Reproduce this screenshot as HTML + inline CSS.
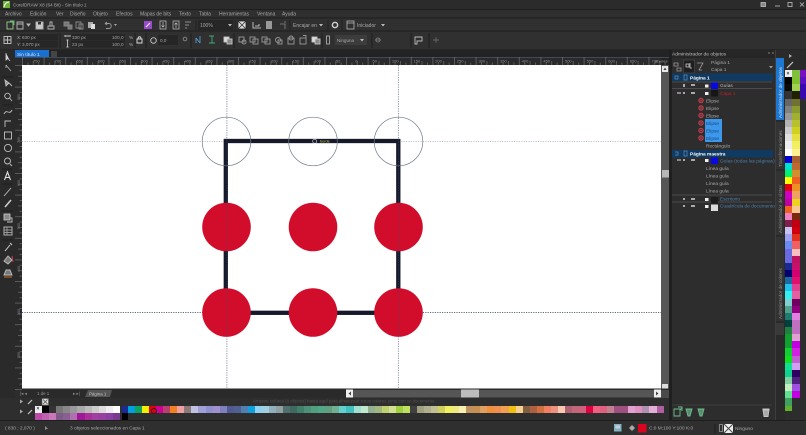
<!DOCTYPE html>
<html><head><meta charset="utf-8"><style>
html,body{margin:0;padding:0;background:#2d2d2d}
#r{position:relative;width:806px;height:435px;overflow:hidden;background:#2d2d2d;font-family:"Liberation Sans",sans-serif;filter:blur(.35px)}
svg{position:absolute;left:0;top:0}
text{font-family:"Liberation Sans",sans-serif;font-size:5px;fill:#a8a8a8}
.p{position:absolute;display:flex}
.p i{flex:1 1 0;display:block}
.c{position:absolute;width:7.4px}
.c i{display:block;height:7.15px}
</style></head><body><div id="r">
<svg width="806" height="435" viewBox="0 0 806 435">
<defs>
<pattern id="tx" x="22" y="57" width="21.6" height="8" patternUnits="userSpaceOnUse"><path d="M.5 0V8M5.9 5.5V8M11.3 4V8M16.7 5.5V8" stroke="#8a8a8a" stroke-width=".5"/></pattern>
<pattern id="ty" x="15" y="65" width="8" height="21.6" patternUnits="userSpaceOnUse"><path d="M0 .5H7M4.5 5.9H7M3 11.3H7M4.5 16.7H7" stroke="#8a8a8a" stroke-width=".5"/></pattern>
</defs>
<!-- bars -->
<rect width="806" height="9" fill="#2b2b2b"/>
<rect y="9" width="806" height="9" fill="#2f2f2f"/><path d="M0 9.5H806M0 18H806M0 31H806M0 50H806" stroke="#1e1e1e"/>
<rect y="18.5" width="806" height="12" fill="#303030"/><rect y="31.5" width="806" height="18" fill="#303030"/>
<rect y="50" width="806" height="15" fill="#232323"/>
<!-- logo/title -->
<rect x="3" y="1" width="7" height="7" fill="#6fb53a"/><path d="M4 7C5 3 7 2 9 2" stroke="#fff" fill="none"/>
<text x="13" y="6.5" font-size="4.6" style="font-size:4.6px">CorelDRAW X8 (64 Bit) - Sin título 1</text>
<g stroke="#c0c0c0" fill="none" stroke-width=".8"><rect x="761" y="2.5" width="4.5" height="4" fill="#888"/><path d="M775 6H780"/><rect x="788" y="2.5" width="4" height="4"/><path d="M800 2.5L804 6.5M804 2.5L800 6.5"/></g>
<!-- menu -->
<g style="font-size:5px">
<text x="5" y="15.5">Archivo</text><text x="30" y="15.5">Edición</text><text x="56" y="15.5">Ver</text><text x="70" y="15.5">Diseño</text><text x="93" y="15.5">Objeto</text><text x="116" y="15.5">Efectos</text><text x="140" y="15.5">Mapas de bits</text><text x="179" y="15.5">Texto</text><text x="199" y="15.5">Tabla</text><text x="219" y="15.5">Herramientas</text><text x="257" y="15.5">Ventana</text><text x="282" y="15.5">Ayuda</text>
</g>
<!-- toolbar 1 -->
<g fill="none" stroke="#b5b5b5" stroke-width=".9">
<rect x="7" y="22" width="6" height="7" stroke="#9ccb8f"/><path d="M10 21H14V25" stroke="#5fc06f"/>
<path d="M17 22H23V29H17Z M17 24H23"/><path d="M27 24L30 24L28.5 26Z" fill="#b5b5b5"/>
<rect x="36" y="22" width="7" height="7" fill="#c8c8c8"/><rect x="38" y="22" width="3" height="2.5" fill="#333" stroke="none"/>
<path d="M48 26H54V29H48ZM50 26V22H52V26"/>
<path d="M64 22L69 22V26H64ZM68 25H72V29H68Z" stroke="#888" fill="#777"/>
<path d="M76 22H81V28H76ZM79 24H83V29H79Z" stroke="#888"/><rect x="88" y="22" width="5" height="6" fill="#aaa" stroke="none"/><rect x="91" y="24" width="4" height="5" fill="#ddd" stroke="none"/>
<path d="M105 23.5H109C112 23.5 112 28.5 109 28.5H106M105 23.5L107 22M105 23.5L107 25" stroke="#999"/><path d="M114 24L117 24L115.500 26Z" fill="#aaa" stroke="none"/>
</g>
<rect x="144" y="21" width="8" height="8" fill="#9b4ad0"/><path d="M146 27L150 23" stroke="#fff"/>
<g fill="none" stroke="#b5b5b5" stroke-width=".8">
<rect x="160" y="21" width="6" height="8"/><path d="M163 22V27M161.500 25.500L163 27L164.500 25.500"/>
<rect x="173" y="21" width="6" height="8"/><path d="M176 28V23M174.500 24.500L176 23L177.500 24.500"/>
<path d="M185 22H191M185 25H189M185 28H187" stroke="#aaa"/>
<rect x="238" y="21" width="8" height="8" fill="#ddd" stroke="#222"/><path d="M238 21L246 29M246 21L238 29" stroke="#333"/>
<path d="M253 22V28H261M255 26H259V24" stroke="#ddd"/><rect x="266" y="21" width="6" height="8" fill="#999" stroke="none"/>
<path d="M280 24H285V29M285 21V23" stroke="#888"/>
<circle cx="335" cy="25" r="2.600" stroke-width="1.500" stroke="#ccc"/>
<rect x="347" y="21" width="7" height="8"/><path d="M347 23H354" />
</g>
<rect x="198" y="20" width="35" height="10" fill="#262626"/><text x="200" y="27">100%</text><path d="M228 24H232L230 26.500Z" fill="#bbb"/>
<text x="293" y="27">Encajar en</text><path d="M319 24H323L321 26.500Z" fill="#bbb"/>
<text x="357" y="27">Iniciador</text><path d="M381 24H385L383 26.500Z" fill="#bbb"/>
<path d="M172 20V30M196 20V30M235 20V30M290 20V30M328 20V30M342 20V30" stroke="#222"/>
<!-- property bar -->
<g fill="none" stroke="#c5c5c5" stroke-width=".9">
<rect x="4" y="36.500" width="7" height="7"/><path d="M4 40H11M7.500 36.500V43.500"/>
<path d="M65 36H75M65 35V37M75 35V37M67.500 40V47M66.500 40H68.500M66.500 47H68.500"/>
<path d="M138 39C138 36 141 36 141 39M137 39H142V43H137Z" stroke="#ddd"/>
<circle cx="153.500" cy="40.500" r="2.800"/>
<circle cx="185" cy="39" r="1.800" stroke="#888"/>
<path d="M196 38V43M200 36V43M196 38L200 43" stroke="#5a9ad0"/>
<path d="M209 36H214M209 43H215M212 36V43" stroke="#45a878"/>
<rect x="224" y="37" width="5" height="5" fill="#ddd"/><rect x="227" y="39" width="5" height="5" fill="#888"/>
<g stroke="#999"><rect x="239" y="37" width="5" height="5"/><circle cx="244" cy="42" r="2"/><rect x="250" y="37" width="5" height="5"/><rect x="253" y="39" width="5" height="5"/><rect x="262" y="37" width="5" height="5"/><rect x="265" y="39" width="5" height="5"/><circle cx="278" cy="40" r="2.500"/><rect x="278" y="40" width="4" height="4"/><rect x="288" y="38" width="6" height="6"/><circle cx="291" cy="38" r="2"/><rect x="300" y="38" width="6" height="6"/><path d="M303 35.500H306V38"/></g>
<rect x="312" y="37" width="5" height="5" fill="#ddd"/><rect x="315" y="39" width="5" height="5" fill="#888"/>
<rect x="326.500" y="36" width="3" height="8" stroke="#aaa"/>
<circle cx="378" cy="40" r="2" stroke="#777"/><path d="M375 40H381" stroke="#777"/>
<path d="M415 37H422V41H417V44H415Z" stroke="#bbb"/><path d="M433 40H439M436 37V43" stroke="#666"/>
</g>
<rect x="20" y="34" width="38" height="6.500" fill="#262626"/><rect x="20" y="41" width="38" height="6.500" fill="#262626"/>
<rect x="71" y="34" width="38" height="6.500" fill="#262626"/><rect x="71" y="41" width="38" height="6.500" fill="#262626"/>
<rect x="109" y="34" width="16" height="6.500" fill="#262626"/><rect x="109" y="41" width="16" height="6.500" fill="#262626"/>
<rect x="158" y="35" width="20" height="10" fill="#262626"/>
<rect x="335" y="35" width="32" height="10" fill="#3c3c3c"/><path d="M360 39H364L362 41.500Z" fill="#bbb"/>
<g style="font-size:4.6px">
<text x="17" y="39" style="font-size:4.6px">X:</text><text x="22" y="39" style="font-size:4.6px">630 px</text>
<text x="17" y="46" style="font-size:4.6px">Y:</text><text x="22" y="46" style="font-size:4.6px">3,070 px</text>
<text x="72" y="39" style="font-size:4.6px">330 px</text><text x="72" y="46" style="font-size:4.6px">23 px</text>
<text x="112" y="39" style="font-size:4.6px">100,0</text><text x="112" y="46" style="font-size:4.6px">100,0</text>
<text x="129" y="39" style="font-size:4.6px">%</text><text x="129" y="46" style="font-size:4.6px">%</text>
<text x="160" y="42" style="font-size:4.6px">0,0</text><text x="337" y="42" style="font-size:4.6px">Ninguna</text>
</g>
<path d="M60 33V48M135 33V48M146 33V48M191 33V48M234 33V48M322 33V48M372 33V48M411 33V48M429 33V48" stroke="#1e1e1e"/>
<!-- tab + ruler -->
<rect x="15" y="50" width="34" height="8" fill="#1a70d0"/><text x="17" y="56" fill="#cfe3f8" style="fill:#cfe3f8;font-size:4.8px">Sin título 1</text>
<rect x="51" y="51" width="6" height="6" fill="#444"/>
<rect x="15" y="57" width="646" height="8" fill="#2a2a2a"/><rect x="15" y="57" width="654" height="1" fill="#3d4a5c"/>
<rect x="22" y="57" width="646" height="8" fill="url(#tx)"/>
<text x="33" y="62.500" fill="#888" style="font-size:4px;fill:#8a8a8a;word-spacing:13.85px">750 700 650 600 550 500 450 400 350 300 250 200 150 100 50 0 50 100 150 200 250 300 350 400 450 500 550 600 650 700</text>
<text x="655" y="62.500" style="font-size:4px;fill:#999">píxeles</text>
<rect x="15" y="65" width="7" height="325" fill="#2a2a2a"/><rect x="15" y="65" width="7" height="325" fill="url(#ty)"/>
<g style="font-size:3.600px"><text transform="translate(20 100) rotate(-90)" style="font-size:3.6px;fill:#888">800</text><text transform="translate(20 143) rotate(-90)" style="font-size:3.6px;fill:#888">700</text><text transform="translate(20 186) rotate(-90)" style="font-size:3.6px;fill:#888">600</text><text transform="translate(20 229) rotate(-90)" style="font-size:3.6px;fill:#888">500</text><text transform="translate(20 272) rotate(-90)" style="font-size:3.6px;fill:#888">400</text><text transform="translate(20 315) rotate(-90)" style="font-size:3.6px;fill:#888">300</text><text transform="translate(20 358) rotate(-90)" style="font-size:3.6px;fill:#888">200</text></g>
<!-- toolbox -->
<rect y="50" width="15" height="370" fill="#2a2a2a"/>
<g fill="none" stroke="#c0c0c0" stroke-width=".9">
<path d="M6 53L6 60L8 58.500L10 61" fill="#ddd"/><path d="M6 65L11 71M6 65V68" stroke="#aaa"/>
<path d="M5 80L9 83L6 86Z" fill="#999"/><path d="M9 83L12 86"/>
<circle cx="7.500" cy="96" r="2.800"/><path d="M9.500 98L12 101"/>
<path d="M4 114C7 108 9 116 12 110"/>
<path d="M5 127V121H11"/><rect x="4.500" y="132" width="7" height="7"/>
<circle cx="8" cy="148" r="3.600"/><circle cx="7.500" cy="161" r="3"/><path d="M10 164L12 166"/>
<path d="M4.500 180L7.500 172L10.500 180M5.500 177.500H9.500" stroke="#ddd" stroke-width="1.100"/>
<path d="M4 196L11 188"/><path d="M5 207L11 200" stroke="#ccc" stroke-width="1.600"/>
<rect x="4" y="214" width="6" height="6" fill="#888"/><path d="M10 218H12V222H7"/>
<rect x="4" y="227" width="8" height="8"/><path d="M4 230H12M4 232.500H12M7 227V235" stroke="#999"/>
<path d="M5 251L10 245M10 243L12 245" stroke="#ddd"/><path d="M4 261L8 256L12 260L8 264Z" fill="#777"/><path d="M12 256L13 262" stroke="#d04050"/>
<path d="M4 275H12L10 270H6Z" fill="#777"/><path d="M4 277H12" stroke="#d07030"/>
</g>
<path d="M2 77H13M2 105H13M2 169H13M2 184H13M2 211H13M2 240H13" stroke="#1d1d1d"/>
<!-- canvas -->
<rect x="22" y="65" width="639" height="323.500" fill="#fff"/>
<path d="M22 141.500H661" stroke="#a9b4c4" stroke-width=".8" stroke-dasharray="1.200 1.200"/>
<path d="M22 312.500H661" stroke="#2c3950" stroke-width=".8" stroke-dasharray="1.200 1.200"/>
<rect x="225.800" y="141" width="172.500" height="171.800" fill="none" stroke="#15192a" stroke-width="4.300"/>
<g fill="none" stroke="#6e7a88" stroke-width=".7"><circle cx="226.500" cy="141.500" r="24.300"/><circle cx="313" cy="141.500" r="24.300"/><circle cx="398.500" cy="141.500" r="24.300"/></g>
<g fill="#d10d2b"><circle cx="226.500" cy="227" r="24.300"/><circle cx="313" cy="227" r="24.300"/><circle cx="398.500" cy="227" r="24.300"/><circle cx="226.500" cy="312.500" r="24.300"/><circle cx="313" cy="312.500" r="24.300"/><circle cx="398.500" cy="312.500" r="24.300"/></g>
<path d="M226.900 65V388M398.300 65V388" stroke="#3d4c70" stroke-width=".7" stroke-dasharray="1.200 1.200" opacity=".85"/>
<circle cx="314.700" cy="141.200" r="2" fill="#15192a" stroke="#e8e8e8" stroke-width=".6"/>
<text x="320" y="142.700" style="font-size:3.800px;fill:#c9c84a">borde</text>
<!-- right vscroll -->
<rect x="661" y="65" width="8" height="325" fill="#565656"/><rect x="662" y="66" width="6" height="6" fill="#e8e8e8"/><path d="M663.500 70L665 67.500L666.500 70" fill="#444"/><rect x="662" y="170" width="7" height="7.500" fill="#b8b8b8"/><rect x="662" y="384" width="6" height="5" fill="#ddd"/>
<rect x="669" y="50" width="3" height="370" fill="#1f1f1f"/>
<!-- bottom nav/scroll -->
<rect x="22" y="388.500" width="647" height="9.500" fill="#2a2a2a"/>
<g style="font-size:4.400px"><text x="20" y="395" style="font-size:4.4px;fill:#8f8f8f">|◂ ◂</text><text x="37" y="395" style="font-size:4.4px;fill:#9a9a9a">1 de 1</text><text x="73" y="395" style="font-size:4.4px;fill:#8f8f8f">▸ ▸|</text></g>
<path d="M85 397L88 390H112L110 397Z" fill="#555"/><text x="89" y="395.500" style="font-size:4.4px;fill:#c0c0c0">Página 1</text>
<rect x="346" y="390" width="312" height="7.500" fill="#565656"/><rect x="346" y="389.500" width="7" height="8" fill="#eee"/><rect x="654" y="389.500" width="7" height="8" fill="#eee"/><path d="M351 391.500L348.500 393.500L351 395.500" fill="#444"/><path d="M656 391.500L658.500 393.500L656 395.500" fill="#444"/><rect x="461" y="389.500" width="18" height="8" fill="#bdbdbd"/><rect x="661" y="390" width="8" height="8" fill="#4a4a4a"/>
<rect x="0" y="398" width="669" height="22" fill="#2e2e2e"/>
<text x="253" y="402.500" style="font-size:4.400px;fill:#505050">Arrastre colores (u objetos) hasta aquí para almacenar estos colores junto con su documento</text>
<!-- palette side icons -->
<path d="M20 399.500L23 401.500L20 403.500M20 409.500L23 411.500L20 413.500" fill="#aaa"/>
<path d="M28 404L32 400M28 414L32 410" stroke="#ccc" stroke-width="1.100"/>
<rect x="42" y="398.500" width="6.500" height="6.500" fill="#ddd" stroke="#555" stroke-width=".5"/><path d="M43 399.500L47.500 404M47.500 399.500L43 404" stroke="#444" stroke-width=".7"/>
<!-- status bar -->
<rect x="0" y="420" width="806" height="15" fill="#2f2f2f"/><path d="M0 420.500H806" stroke="#1e1e1e"/>
<text x="5" y="429.500" style="font-size:4.8px">( 830 ; 2,070 )</text><path d="M45 427L48 429.500L45 431" fill="#888" transform="translate(0 -1)"/>
<text x="70" y="429.500" style="font-size:4.800px">3 objetos seleccionados en Capa 1</text>
<rect x="614" y="424" width="7.500" height="7.500" fill="#7fb2c4"/><rect x="615.500" y="425.500" width="4.500" height="3" fill="#ccc"/>
<path d="M629 428L632 425L635 428L632 431Z" fill="#aaa"/><rect x="638" y="424" width="8.500" height="8.500" fill="#d9041f"/>
<text x="649" y="429.500" style="font-size:4.800px">C:0 M:100 Y:100 K:0</text>
<rect x="719.500" y="424.500" width="3" height="7" fill="none" stroke="#999" stroke-width=".8"/><rect x="724" y="424" width="9" height="9" fill="#eee"/><path d="M724 424L733 433M733 424L724 433" stroke="#444" stroke-width=".9"/>
<text x="735" y="430" style="font-size:4.800px">Ninguno</text><path d="M715 424V433" stroke="#1e1e1e"/>
<!-- object manager -->
<rect x="672" y="50" width="103" height="370" fill="#2d2d2d"/>
<rect x="672" y="50" width="103" height="8" fill="#262626"/><text x="672" y="55.500" style="font-size:4.900px;fill:#bdbdbd">Administrador de objetos</text>
<g fill="#555"><rect x="772" y="52" width="2" height="2"/><rect x="768" y="52" width="2" height="2"/></g>
<g fill="none" stroke="#9a9a9a" stroke-width=".8"><path d="M674 63H678V66H674ZM677 68H681V71H677Z"/><rect x="683.500" y="60" width="11" height="13" fill="#1f1f1f" stroke="#444"/><path d="M686 64H689V67H686ZM690 63V68H692" stroke="#ccc"/><path d="M697 63H703L699 70H702" /></g>
<text x="711" y="64" style="font-size:4.800px">Página 1</text><text x="711" y="71" style="font-size:4.800px">Capa 1</text><path d="M769 66H773L771 68.500Z" fill="#999"/>
<rect x="672" y="73.500" width="101" height="7.500" fill="#113a62"/><rect x="672" y="150" width="101" height="7.500" fill="#113a62"/>
<path d="M672 82H772M672 88.500H772M672 195H772M672 202H772" stroke="#555" stroke-width=".8"/>
<rect x="705" y="119" width="17" height="23" fill="#3d97ea"/>
<g style="font-size:4.800px">
<text x="690" y="79.500" style="font-size:4.800px;fill:#fff;font-weight:bold">Página 1</text>
<text x="720" y="87" style="font-size:4.800px;fill:#bbb">Guías</text>
<text x="720" y="95" style="font-size:4.800px;fill:#c71f2f">Capa 1</text>
<text x="706" y="102.500" style="font-size:4.800px">Elipse</text><text x="706" y="110" style="font-size:4.800px">Elipse</text><text x="706" y="117.500" style="font-size:4.800px">Elipse</text>
<text x="706" y="125" style="font-size:4.800px;fill:#124b83">Elipse</text><text x="706" y="132.500" style="font-size:4.800px;fill:#124b83">Elipse</text><text x="706" y="140" style="font-size:4.800px;fill:#124b83">Elipse</text>
<text x="706" y="147.500" style="font-size:4.800px">Rectángulo</text>
<text x="690" y="155.500" style="font-size:4.800px;fill:#fff;font-weight:bold">Página maestra</text>
<text x="720" y="162.500" style="font-size:4.800px;fill:#4a7fae">Guías (todas las páginas)</text>
<text x="706" y="170" style="font-size:4.800px">Línea guía</text><text x="706" y="177.500" style="font-size:4.800px">Línea guía</text><text x="706" y="185" style="font-size:4.800px">Línea guía</text><text x="706" y="192.500" style="font-size:4.800px">Línea guía</text>
<text x="720" y="200.500" style="font-size:4.800px;fill:#4a7fae">Escritorio</text>
<text x="720" y="207.500" style="font-size:4.800px;fill:#4a7fae">Cuadrícula de documento</text>
</g>
<g fill="#d63a4a"><circle cx="701" cy="100.500" r="2.700"/><circle cx="701" cy="108" r="2.700"/><circle cx="701" cy="115.500" r="2.700"/><circle cx="701" cy="123" r="2.700"/><circle cx="701" cy="130.500" r="2.700"/><circle cx="701" cy="138" r="2.700"/></g>
<g fill="none" stroke="#3a3a3a" stroke-width=".8"><circle cx="701" cy="100.500" r="1.200"/><circle cx="701" cy="108" r="1.200"/><circle cx="701" cy="115.500" r="1.200"/><circle cx="701" cy="123" r="1.200"/><circle cx="701" cy="130.500" r="1.200"/><circle cx="701" cy="138" r="1.200"/></g>
<!-- layer icon groups -->
<g fill="none" stroke="#9a9a9a" stroke-width=".7">
<path d="M675 76H678V79H675ZM675 152H678V155H675" stroke="#5f8fb8"/><path d="M684 75V80H687V75ZM684 151V156H687V151Z" stroke="#5f8fb8"/>
<path d="M683 85H685M683 86H685 M691 85H695M683 93H685M691 93H695M683 160H685M691 160H695M683 199H685M691 199H695M683 206H685M691 206H695" stroke="#aaa" stroke-width="2"/>
<path d="M677 93H681M677 160H681" stroke="#888" stroke-width="2"/>
</g>
<g fill="#eee"><rect x="705" y="84.500" width="3.500" height="3"/><rect x="705" y="92" width="3.500" height="3"/><rect x="705" y="159" width="3.500" height="3"/><rect x="705" y="198" width="3.500" height="3"/><rect x="705" y="205" width="3.500" height="3"/></g>
<rect x="711" y="82.500" width="7" height="6.500" fill="#0808e0"/><rect x="711" y="90" width="7" height="6.500" fill="#161616"/><rect x="711" y="157.500" width="7" height="6.500" fill="#0808e0"/><rect x="711" y="197" width="7" height="6.500" fill="#1c1c1c"/><rect x="711" y="204.500" width="7" height="6.500" fill="#dcdcdc"/>
<!-- footer -->
<path d="M672 405H772" stroke="#3d3d3d"/>
<g fill="none" stroke-width=".9"><path d="M674 409H680V416H674Z M680 410L682 408M678 407H682V411" stroke="#6cc08a"/><path d="M686 409H692L690 416H688Z" fill="#5a8a70" stroke="#6cc08a"/><path d="M698 409H704L702 416H700Z" fill="#5a8a70" stroke="#6cc08a"/><path d="M763 410H769L768 416.500H764ZM762.500 409H769.500" stroke="#c5c5c5" fill="#aaa"/></g>
<rect x="775" y="50" width="10" height="370" fill="#2a2a2a"/>
<path d="M775.500 50V420" stroke="#3e3e3e"/>
<rect x="776" y="58" width="8" height="62" fill="#1e78d2"/><text transform="translate(782 118) rotate(-90)" style="font-size:4.600px;fill:#cfe0f0">Administrador de objetos</text>
<rect x="776" y="122" width="8" height="47" fill="#333"/><text transform="translate(782 167) rotate(-90)" style="font-size:4.600px;fill:#8e8e8e">Transformaciones</text>
<rect x="776" y="171" width="8" height="64" fill="#333"/><text transform="translate(782 233) rotate(-90)" style="font-size:4.600px;fill:#8e8e8e">Administrador de vistas</text>
<rect x="776" y="237" width="8" height="84" fill="#333"/><text transform="translate(782 319) rotate(-90)" style="font-size:4.600px;fill:#8e8e8e">Administrador de colores</text>
<rect x="776" y="323" width="8" height="12" fill="#3a3a3a"/>
<rect x="785" y="50" width="21" height="20" fill="#2a2a2a"/>
<path d="M789 54L792 56L789 58" fill="#aaa"/><path d="M787 68L793 62" stroke="#ccc" stroke-width="1.200"/>
</svg>

<!-- bottom palette -->
<div class="p" style="left:35px;top:406px;width:85px;height:7px">
<i style="background:#eee"></i><i style="background:#000"></i><i style="background:#333"></i><i style="background:#777"></i><i style="background:#888"></i><i style="background:#999"></i><i style="background:#aaa"></i><i style="background:#bbb"></i><i style="background:#ccc"></i><i style="background:#ddd"></i><i style="background:#eee"></i><i style="background:#fff"></i></div>
<div class="p" style="left:35px;top:413px;width:85px;height:7px">
<i style="background:#b84aa8"></i><i style="background:#c060b0"></i><i style="background:#c878b8"></i><i style="background:#7e5a88"></i><i style="background:#8a6090"></i><i style="background:#b070b0"></i><i style="background:#a01898"></i><i style="background:#a83098"></i><i style="background:#a040a0"></i><i style="background:#9840a0"></i><i style="background:#8a40a0"></i><i style="background:#7a3a90"></i></div>
<div style="position:absolute;left:122px;top:406px;width:6px;height:7px;background:#1a2a90"></div>
<div style="position:absolute;left:122px;top:413px;width:6px;height:7px;background:#000"></div>
<div class="p" style="left:128px;top:405.500px;width:535px;height:7.500px">
<i style="background:#00a0e0"></i><i style="background:#10a060"></i><i style="background:#f0f000"></i><i style="background:#e00010"></i><i style="background:#d00090"></i><i style="background:#b84070"></i><i style="background:#f08020"></i><i style="background:#f0a0a0"></i><i style="background:#8a7a7a"></i><i style="background:#c0c0e0"></i><i style="background:#a0a0d8"></i><i style="background:#9090d0"></i><i style="background:#a090d0"></i><i style="background:#8080c0"></i><i style="background:#505a90"></i><i style="background:#506090"></i><i style="background:#5080b0"></i><i style="background:#10a0e0"></i><i style="background:#90d0f0"></i><i style="background:#a0d0e0"></i><i style="background:#90b0c0"></i><i style="background:#90a0a0"></i><i style="background:#507070"></i><i style="background:#406a60"></i><i style="background:#40806a"></i><i style="background:#50907a"></i><i style="background:#50a080"></i><i style="background:#50a888"></i><i style="background:#60a080"></i><i style="background:#70b090"></i><i style="background:#60d0d0"></i><i style="background:#40c0c0"></i><i style="background:#a0e0d0"></i><i style="background:#c0e8d0"></i><i style="background:#90b090"></i><i style="background:#a0b880"></i><i style="background:#c0d070"></i><i style="background:#d0e090"></i><i style="background:#a0d040"></i><i style="background:#c0e060"></i><i style="background:#404040"></i><i style="background:#a0a080"></i><i style="background:#b0b090"></i><i style="background:#c0c090"></i><i style="background:#d0d060"></i><i style="background:#f0f060"></i><i style="background:#f0e880"></i><i style="background:#f8f0b0"></i><i style="background:#c09060"></i><i style="background:#c89050"></i><i style="background:#e0a060"></i><i style="background:#f0903c"></i><i style="background:#f09050"></i><i style="background:#f0a050"></i><i style="background:#f0c010"></i><i style="background:#f8d090"></i><i style="background:#806040"></i><i style="background:#b06040"></i><i style="background:#d07040"></i><i style="background:#f08060"></i><i style="background:#f09080"></i><i style="background:#f8c8b0"></i><i style="background:#b06070"></i><i style="background:#c06878"></i><i style="background:#d06080"></i><i style="background:#e00040"></i><i style="background:#f06080"></i><i style="background:#e06080"></i><i style="background:#c08090"></i><i style="background:#a05080"></i><i style="background:#a05080"></i><i style="background:#e0a0d0"></i><i style="background:#e090c0"></i><i style="background:#b090b0"></i><i style="background:#e0b0d8"></i><i style="background:#b060a0"></i></div>
<div style="position:absolute;left:36.500px;top:407px;width:5px;height:5px;color:#333;font:bold 5px/5px 'Liberation Sans',sans-serif">×</div>
<div style="position:absolute;left:150.500px;top:407.500px;width:4px;height:4px;border:.6px solid #222;border-radius:50%"></div>

<!-- right palette -->
<div class="c" style="left:785px;top:70px;height:341px;overflow:hidden">
<i style="background:#eee"></i><i style="background:#000"></i><i style="background:#0a0a0a"></i><i style="background:#333"></i><i style="background:#666"></i><i style="background:#808080"></i><i style="background:#999"></i><i style="background:#b3b3b3"></i><i style="background:#ccc"></i><i style="background:#e0e0e0"></i><i style="background:#eee"></i><i style="background:#fff"></i><i style="background:#0000d0"></i><i style="background:#00e0d0"></i><i style="background:#00f070"></i><i style="background:#ffff00"></i><i style="background:#e00010"></i><i style="background:#d000c0"></i><i style="background:#c000a0"></i><i style="background:#f06020"></i><i style="background:#f080c0"></i><i style="background:#802048"></i><i style="background:#c8c0f0"></i><i style="background:#a0a0f0"></i><i style="background:#6a8cf0"></i><i style="background:#6a6ae0"></i><i style="background:#6a6ae0"></i><i style="background:#1a2a90"></i><i style="background:#000070"></i><i style="background:#1a6aa0"></i><i style="background:#20c0f0"></i><i style="background:#30f0f0"></i><i style="background:#80d0d0"></i><i style="background:#50a090"></i><i style="background:#207a70"></i><i style="background:#004040"></i><i style="background:#208040"></i><i style="background:#10a030"></i><i style="background:#10a030"></i><i style="background:#10d030"></i><i style="background:#10e020"></i><i style="background:#10e090"></i><i style="background:#10d090"></i><i style="background:#80d0a0"></i><i style="background:#c0f0c0"></i><i style="background:#60e090"></i><i style="background:#40a060"></i><i style="background:#60b030"></i></div>
<div class="c" style="left:792.400px;top:70px;height:341px;overflow:hidden">
<i style="background:#80c040"></i><i style="background:#80c030"></i><i style="background:#a0d050"></i><i style="background:#202000"></i><i style="background:#707030"></i><i style="background:#8a9a30"></i><i style="background:#a0b030"></i><i style="background:#b8c030"></i><i style="background:#d0d020"></i><i style="background:#e8e040"></i><i style="background:#f0f060"></i><i style="background:#fff090"></i><i style="background:#a86030"></i><i style="background:#c06830"></i><i style="background:#d09030"></i><i style="background:#f06020"></i><i style="background:#f09020"></i><i style="background:#f0a060"></i><i style="background:#f0d020"></i><i style="background:#f8c890"></i><i style="background:#7a2a10"></i><i style="background:#c00010"></i><i style="background:#d00010"></i><i style="background:#e03020"></i><i style="background:#f06060"></i><i style="background:#f8c0c0"></i><i style="background:#c01060"></i><i style="background:#c81068"></i><i style="background:#d00070"></i><i style="background:#e01070"></i><i style="background:#e04090"></i><i style="background:#e060a0"></i><i style="background:#700060"></i><i style="background:#900080"></i><i style="background:#e080e0"></i><i style="background:#c070c0"></i><i style="background:#c070c0"></i><i style="background:#e0a0d0"></i><i style="background:#c000e0"></i><i style="background:#d020e0"></i><i style="background:#c060d0"></i><i style="background:#d0a0f0"></i><i style="background:#300060"></i><i style="background:#502080"></i><i style="background:#a050e0"></i><i style="background:#c000e0"></i></div>
<div class="c" style="left:799.800px;top:70px;width:6.200px">
<i style="background:#7a10c0"></i><i style="background:#5a10c0"></i><i style="background:#3808b0"></i><i style="background:#3808b0"></i></div>
<div style="position:absolute;left:786.500px;top:70.500px;width:5px;height:6px;color:#333;font:bold 5px/6px 'Liberation Sans',sans-serif">×</div>
</div></body></html>
